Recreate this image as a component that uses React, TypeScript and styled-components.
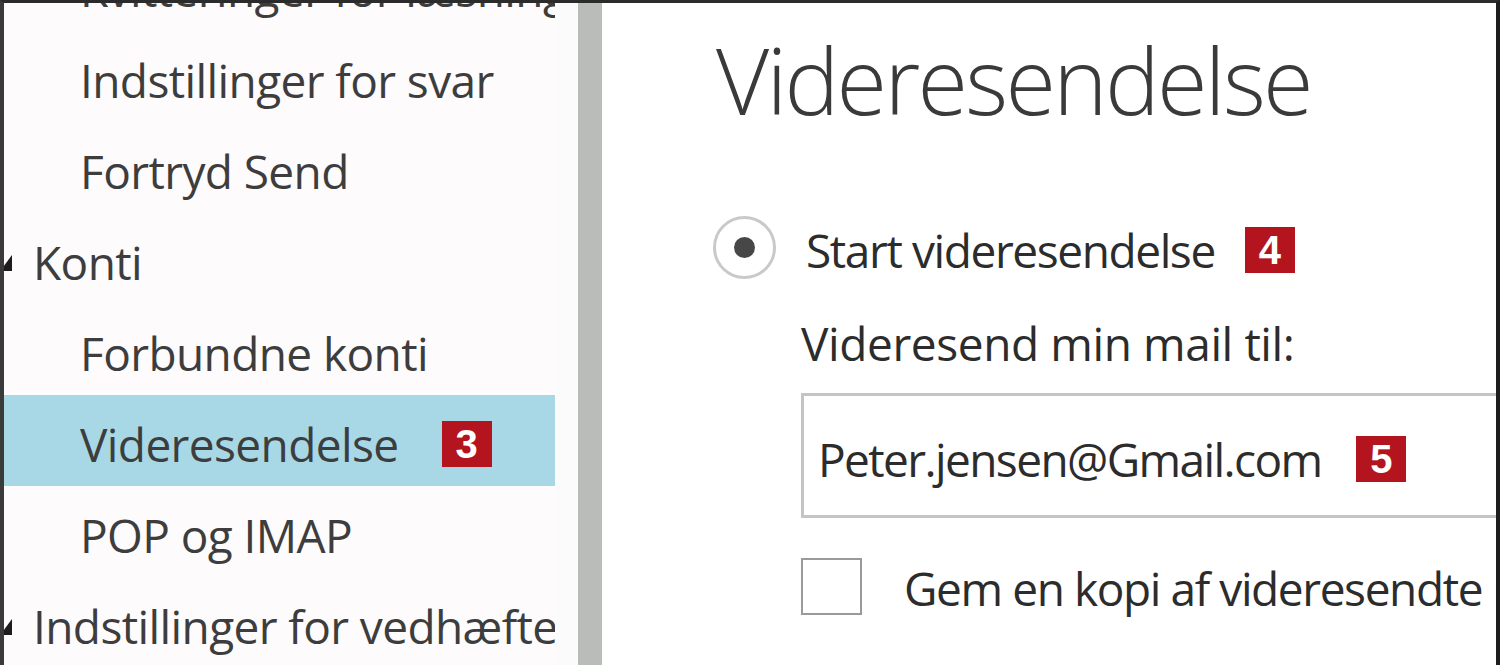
import React from "react";
import styled, { createGlobalStyle } from "styled-components";

const GlobalStyle = createGlobalStyle`
  html, body { margin: 0; padding: 0; background: #ffffff; overflow: hidden; }
  * { box-sizing: border-box; }
`;

const Frame = styled.div`
  width: 1500px;
  height: 665px;
  display: flex;
  border-top: 3px solid #2b2b2b;
  border-left: 4px solid #3a3a3a;
  border-right: 4px solid #1e1e1e;
  overflow: hidden;
  font-family: "Open Sans", "Noto Sans", sans-serif;
`;

const Sidebar = styled.nav`
  width: 551px;
  flex: none;
  background: #fdfbfb;
  overflow: hidden;
`;

const NavList = styled.ul`
  list-style: none;
  margin: -63px 0 0 0;
  padding: 0;
`;

const NavRow = styled.li<{ $group?: boolean; $active?: boolean }>`
  height: 91px;
  display: flex;
  align-items: center;
  padding: 6px 0 0 ${(p) => (p.$group ? "0" : "76px")};
  background: ${(p) => (p.$active ? "#a8d8e6" : "transparent")};
  color: #3d3d3d;
  font-size: 46px;
  letter-spacing: -0.6px;
  white-space: nowrap;
`;

const Marker = styled.span`
  width: 29px;
  flex: none;
  display: flex;
  align-items: center;
  margin-top: 2px;
  svg { margin-left: -4px; }
`;

const Badge = styled.span<{ $gap: number }>`
  display: inline-flex;
  align-items: center;
  justify-content: center;
  width: 50px;
  height: 46px;
  margin-left: ${(p) => p.$gap}px;
  background: #b3141d;
  color: #ffffff;
  font-family: "Liberation Sans", Arial, sans-serif;
  font-weight: 700;
  font-size: 40px;
  letter-spacing: 0;
  line-height: 1;
  flex: none;
`;

const Gutter = styled.div`
  width: 23px;
  flex: none;
  background: #fbfbfb;
`;

const ScrollTrack = styled.div`
  width: 24px;
  flex: none;
  background: #b9bcb9;
`;

const Main = styled.main`
  flex: 1;
  min-width: 0;
  overflow: hidden;
  background: #ffffff;
  padding: 15px 0 0 114px;
  color: #2c2c2c;
`;

const Heading = styled.h1`
  margin: 0;
  font-weight: 300;
  font-size: 92px;
  letter-spacing: -2.7px;
  line-height: 124px;
  color: #3a3a3a;
  white-space: nowrap;
`;

const RadioRow = styled.label`
  display: flex;
  align-items: center;
  margin-top: 73px;
  margin-left: -3px;
  font-size: 46px;
  letter-spacing: -1.4px;
  white-space: nowrap;
  height: 64px;
`;

const Radio = styled.span`
  width: 63px;
  height: 63px;
  flex: none;
  border-radius: 50%;
  border: 3px solid #c9c9c9;
  background: #ffffff;
  display: flex;
  align-items: center;
  justify-content: center;
  margin-right: 30px;
  &::after {
    content: "";
    width: 21px;
    height: 21px;
    border-radius: 50%;
    background: #474747;
  }
`;

const RadioText = styled.span`
  display: flex;
  align-items: center;
  padding-top: 6px;
`;

const SubBlock = styled.div`
  padding-left: 85px;
`;

const FieldLabel = styled.div`
  font-size: 46px;
  letter-spacing: -0.4px;
  white-space: nowrap;
  margin-top: 33px;
  line-height: 62px;
`;

const InputBox = styled.div`
  width: 740px;
  height: 125px;
  margin-top: 19px;
  border: 3px solid #c4c4c4;
  border-right: none;
  display: flex;
  align-items: center;
  padding: 6px 0 0 14px;
  font-size: 46px;
  letter-spacing: -1.6px;
  white-space: nowrap;
`;

const CheckRow = styled.label`
  display: flex;
  align-items: center;
  margin-top: 35px;
  font-size: 46px;
  letter-spacing: -1.4px;
  white-space: nowrap;
`;

const CheckBox = styled.span`
  width: 61px;
  height: 57px;
  flex: none;
  border: 2px solid #9a9a9a;
  background: #ffffff;
  margin-right: 42px;
`;

const CheckText = styled.span`
  padding-top: 4px;
`;

const Triangle = () => (
  <svg width="12" height="16" viewBox="0 0 12 16">
    <polygon points="12,0 12,16 0,16" fill="#1d1d1d" />
  </svg>
);

type Item = { label: string; group?: boolean; active?: boolean; badge?: string };

const items: Item[] = [
  { label: "Kvitteringer for læsning" },
  { label: "Indstillinger for svar" },
  { label: "Fortryd Send" },
  { label: "Konti", group: true },
  { label: "Forbundne konti" },
  { label: "Videresendelse", active: true, badge: "3" },
  { label: "POP og IMAP" },
  { label: "Indstillinger for vedhæftede filer", group: true },
];

export default function App() {
  return (
    <>
      <GlobalStyle />
      <Frame>
        <Sidebar>
          <NavList>
            {items.map((it) => (
              <NavRow key={it.label} $group={it.group} $active={it.active}>
                {it.group && (
                  <Marker>
                    <Triangle />
                  </Marker>
                )}
                {it.label}
                {it.badge && <Badge $gap={43}>{it.badge}</Badge>}
              </NavRow>
            ))}
          </NavList>
        </Sidebar>
        <Gutter />
        <ScrollTrack />
        <Main>
          <Heading>Videresendelse</Heading>
          <RadioRow>
            <Radio />
            <RadioText>
              Start videresendelse
              <Badge $gap={30}>4</Badge>
            </RadioText>
          </RadioRow>
          <SubBlock>
            <FieldLabel>Videresend min mail til:</FieldLabel>
            <InputBox>
              Peter.jensen@Gmail.com
              <Badge $gap={35}>5</Badge>
            </InputBox>
            <CheckRow>
              <CheckBox />
              <CheckText>Gem en kopi af videresendte meddelelser</CheckText>
            </CheckRow>
          </SubBlock>
        </Main>
      </Frame>
    </>
  );
}
